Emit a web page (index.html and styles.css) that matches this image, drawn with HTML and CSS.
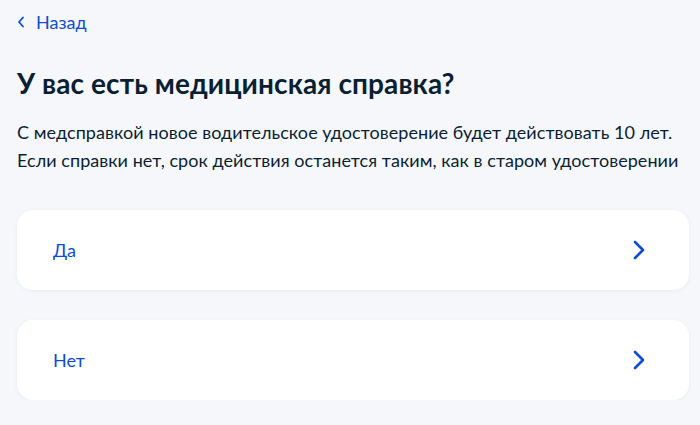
FILE: index.html
```html
<!DOCTYPE html>
<html lang="ru">
<head>
<meta charset="utf-8">
<link rel="stylesheet" href="styles.css">
</head>
<body>
<main class="page">
  <a class="back" href="#">
    <svg class="back-icon" width="8" height="12" viewBox="0 0 8 12"><path d="M6 1.5L2 6l4 4.5" fill="none" stroke="#0d4cd3" stroke-width="1.8" stroke-linecap="round" stroke-linejoin="round"/></svg>
    <span>Назад</span>
  </a>
  <h1 class="title">У вас есть медицинская справка?</h1>
  <p class="lead">С медсправкой новое водительское удостоверение будет действовать 10 лет.<br>Если справки нет, срок действия останется таким, как в старом удостоверении</p>
  <div class="options">
    <a class="option" href="#"><span>Да</span>
      <svg class="chev" width="12" height="20" viewBox="0 0 12 20"><path d="M2 2l8 8-8 8" fill="none" stroke="#0d4cd3" stroke-width="2.6" stroke-linecap="round" stroke-linejoin="round"/></svg>
    </a>
    <a class="option" href="#"><span>Нет</span>
      <svg class="chev" width="12" height="20" viewBox="0 0 12 20"><path d="M2 2l8 8-8 8" fill="none" stroke="#0d4cd3" stroke-width="2.6" stroke-linecap="round" stroke-linejoin="round"/></svg>
    </a>
  </div>
</main>
</body>
</html>
```
FILE: styles.css
```css
html, body {
  margin: 0;
  padding: 0;
  background: #f5f7fb;
}
body {
  font-family: Lato, "Noto Sans", sans-serif;
  color: #0b1f33;
}
.page {
  padding: 11px 11px 0 17px;
}
.back {
  display: flex;
  align-items: center;
  gap: 11px;
  color: #0d4cd3;
  text-decoration: none;
  font-size: 18px;
  line-height: 22px;
}
.title {
  margin: 32px 0 0;
  font-size: 28px;
  line-height: 36px;
  font-weight: 700;
  letter-spacing: 0.1px;
}
.lead {
  margin: 17px 0 0;
  font-size: 18px;
  line-height: 28px;
  white-space: nowrap;
  letter-spacing: 0.05px;
}
.options {
  margin-top: 36px;
  display: flex;
  flex-direction: column;
  gap: 30px;
}
.option {
  display: flex;
  align-items: center;
  justify-content: space-between;
  height: 80px;
  box-sizing: border-box;
  padding: 0 44px 0 36px;
  background: #fff;
  border-radius: 16px;
  box-shadow: 0 1px 4px rgba(30, 60, 120, 0.06);
  color: #0d4cd3;
  text-decoration: none;
  font-size: 18px;
}
```
